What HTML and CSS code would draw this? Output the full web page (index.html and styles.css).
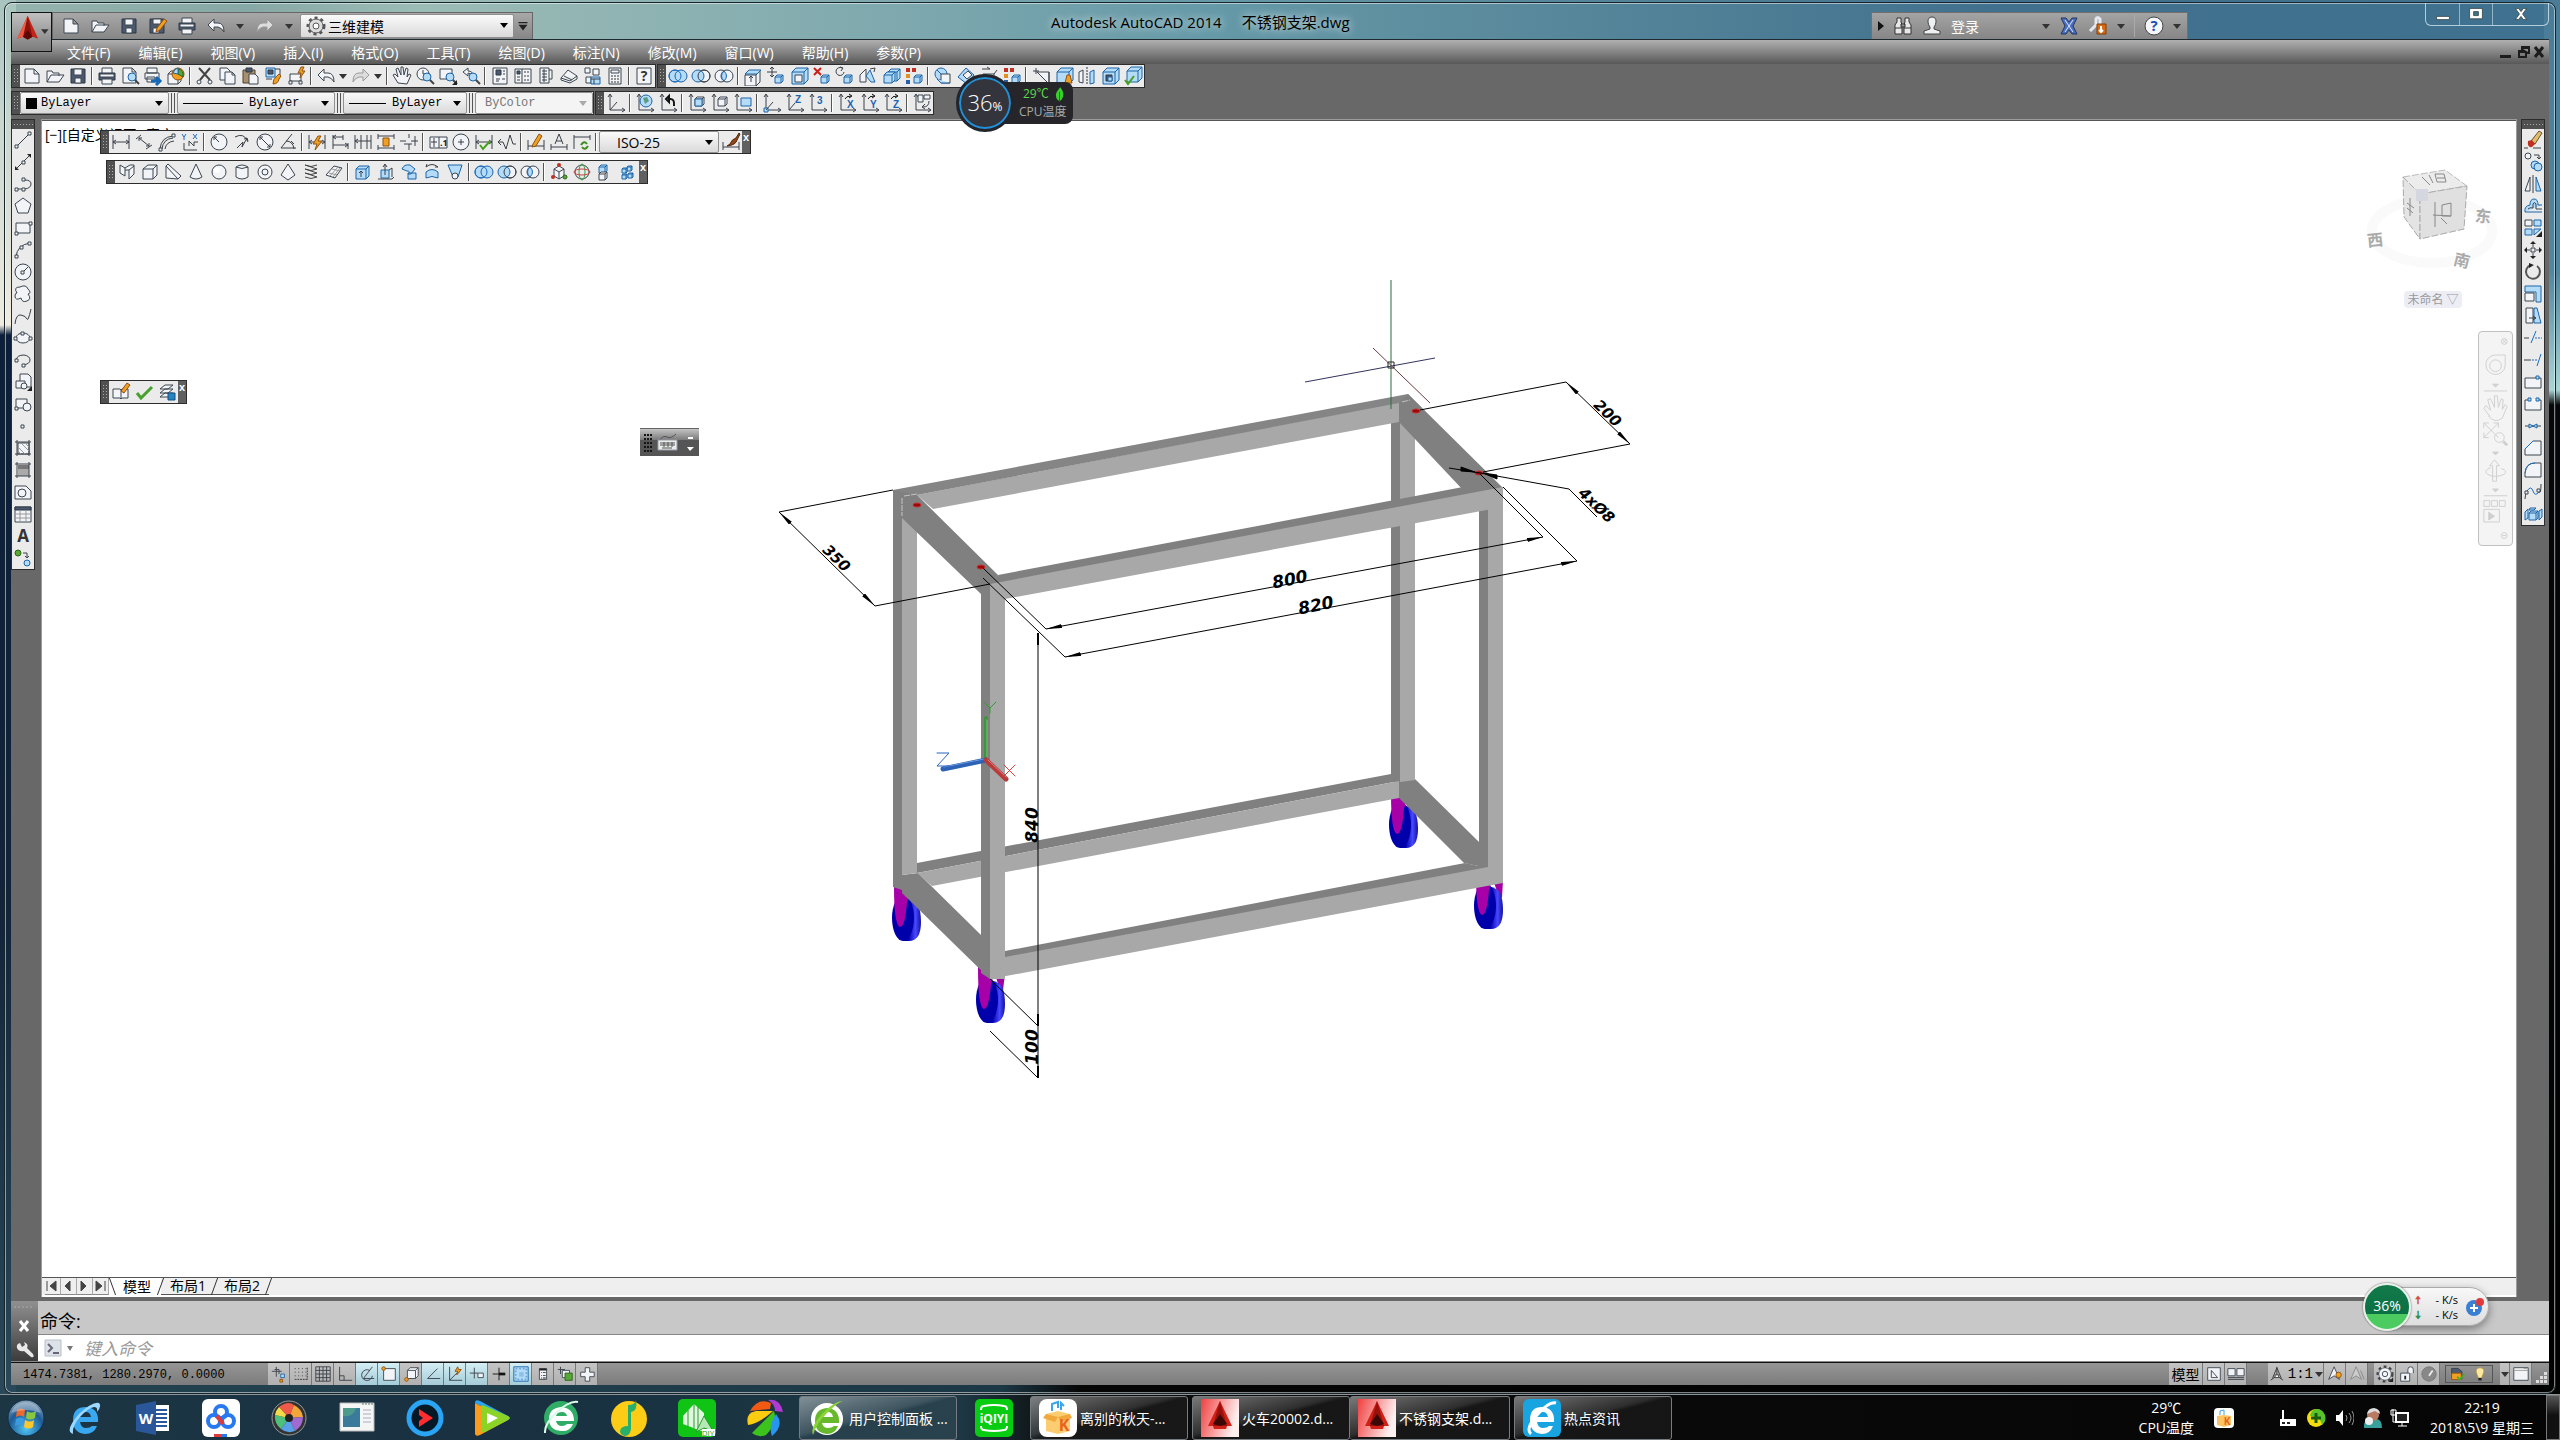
FILE: index.html
```html
<!DOCTYPE html>
<html lang="zh-CN">
<head>
  <meta charset="UTF-8">
  <title>Autodesk AutoCAD 2014 - 不锈钢支架.dwg</title>
  <link rel="stylesheet" href="styles.css">
</head>
<body>

  <div class="window">
    <!-- Title bar -->
    <header class="titlebar">
      <div class="quick-access">
        <div class="icons qat" data-icons="new open save saveas print undo v redo v"></div>
        <div class="combo workspace-combo">
          <svg class="combo-icon" viewBox="0 0 20 20"><circle cx="10" cy="10" r="8" fill="none" stroke="#555" stroke-width="3" stroke-dasharray="3 3"/><circle cx="10" cy="10" r="7" fill="#ddd" stroke="#555"/><circle cx="10" cy="10" r="3" fill="#fff" stroke="#555"/></svg>
          <select aria-label="工作空间"><option>三维建模</option></select>
        </div>
        <button class="qat-more" aria-label="自定义快速访问工具栏"></button>
      </div>
      <div class="title"><span>Autodesk AutoCAD 2014</span><span>不锈钢支架.dwg</span></div>
      <div class="info-center">
        <i class="play"></i>
        <svg viewBox="0 0 20 20"><path d="M4 2h4v4l1 3v9H2V9l2-3zM12 2h4v4l2 3v9h-7V9l1-3zM8 8h4v3H8z" fill="#e8e8e8" stroke="#333"/><path d="M2 12h7M11 12h7" stroke="#333"/></svg>
        <svg viewBox="0 0 20 20"><path d="M10 1c6 0 4 8 2 10v2l6 2v3H2v-3l6-2v-2C6 9 4 1 10 1z" fill="#eef1f4" stroke="#444"/></svg>
        <button class="login">登录</button>
        <i class="drop"></i>
        <svg viewBox="0 0 20 20"><path d="M2 2h5l3 4 3-4h5l-4 8 4 8h-5l-3-4-3 4H2l4-8z" fill="#4a6fc0" stroke="#24365c"/><path d="M6 4l8 12M14 4L6 16" stroke="#dce6fa"/></svg>
        <svg viewBox="0 0 20 20"><path d="M2 15L8 9V3q1-3 4 0v6l5 5" fill="none" stroke="#e4e8f0" stroke-width="3"/><path d="M9 8h9v10H9z" fill="#d96a12" stroke="#8a3c00"/><path d="M13 10v6m-2-2l2 2 2-2" stroke="#fff" stroke-width="2" fill="none"/></svg>
        <i class="drop"></i>
        <span class="info-sep"></span>
        <svg viewBox="0 0 20 20"><circle cx="10" cy="10" r="9" fill="#f4f6fa" stroke="#444"/><text x="10" y="15" text-anchor="middle" font-size="15" font-weight="bold" fill="#1c4fb0">?</text></svg>
        <i class="drop"></i>
      </div>
      <div class="window-buttons">
        <button aria-label="最小化"><svg viewBox="0 0 20 20"><path d="M2 13h16v4H2z" fill="#fff" stroke="#344"/></svg></button>
        <button aria-label="最大化"><svg viewBox="0 0 20 20"><path d="M2 3h16v13H2zM7 7v5h6V7z" fill="#fff" stroke="#344" fill-rule="evenodd"/></svg></button>
        <button aria-label="关闭"><svg viewBox="0 0 20 20"><path d="M3 3h4l3 4 3-4h4l-5 7 5 7h-4l-3-4-3 4H3l5-7z" fill="#fff" stroke="#344"/></svg></button>
      </div>
    </header>

    <button class="app-button" aria-label="应用程序菜单">
      <svg viewBox="0 0 40 40"><path d="M16 3l11 24-6-2-5 3-5-3-6 2z" fill="#c32417"/><path d="M16 3l5 22-5 3-5-3z" fill="#8d120b"/><path d="M16 3L5 27l6-2z" fill="#ef5a45"/><path d="M16 18l5 7-5 3-5-3z" fill="#5d0805"/><path d="M30 17h8l-4 5z" fill="#333"/></svg>
    </button>

    <!-- Menu bar -->
    <nav class="menubar">
      <button>文件(F)</button>
      <button>编辑(E)</button>
      <button>视图(V)</button>
      <button>插入(I)</button>
      <button>格式(O)</button>
      <button>工具(T)</button>
      <button>绘图(D)</button>
      <button>标注(N)</button>
      <button>修改(M)</button>
      <button>窗口(W)</button>
      <button>帮助(H)</button>
      <button>参数(P)</button>
      <div class="mdi-buttons">
        <svg viewBox="0 0 46 16"><path d="M1 11h11v3H1zM22 2h9v8h-3v4h-9V6h3zM24 5h5v3M21 9h5v3h-5z" fill="#1c1c1c" fill-rule="evenodd"/><path d="M36 3l8 10M44 3l-8 10" stroke="#1c1c1c" stroke-width="3"/></svg>
      </div>
    </nav>

    <!-- Docked toolbars -->
    <div class="dock">
      <div class="dock-row">
        <div class="toolbar"><div class="icons" data-icons="new open save | print preview publish globe | cut copy paste match blockedit | undo v redo v | hand zoomrt zoomwin zoomprev | props design palette sheet markup calc | help"></div></div>
        <div class="toolbar"><div class="icons" data-icons="union subtract intersect | extface moveface offface delface rotface taperface copyface colorface | copyedge blueedge edge colorface | imprint clean separate shell check"></div></div>
      </div>
      <div class="dock-row">
        <div class="toolbar">
          <div class="combo color-combo"><i class="swatch"></i><select aria-label="颜色"><option>ByLayer</option></select></div>
          <i class="double-bar"></i>
          <div class="combo line-combo"><i class="line"></i><select aria-label="线型"><option>ByLayer</option></select></div>
          <i class="double-bar"></i>
          <div class="combo weight-combo"><i class="line"></i><select aria-label="线宽"><option>ByLayer</option></select></div>
          <i class="double-bar"></i>
          <div class="combo plot-combo disabled"><select aria-label="打印样式" disabled><option>ByColor</option></select></div>
        </div>
        <div class="toolbar"><div class="icons" data-icons="ucs | ucsworld ucsprev | ucsface ucsobj ucsview | ucsorigin ucsz ucs3 | ucsrx ucsry ucsrz | ucsapply"></div></div>
      </div>
    </div>

    <main class="workspace">
      <div class="toolbar vertical"><div class="icons" data-icons="line xline pline polygon rect arc circle cloud spline ellipse earc insert block point hatch gradient region table text addsel"></div></div>

      <div class="viewport-frame">
        <div class="viewport">
          <span class="view-label">[−][自定义视图][真实]</span>

          <!-- Model space: trolley frame with castors and dimensions -->
          <svg class="model" viewBox="42 121 2474 1156">
            <defs>
              <linearGradient id="tread"><stop offset="0.300" stop-color="#0000b0"/><stop offset="0.700" stop-color="#4848ff"/><stop offset="1" stop-color="#1010a0"/></linearGradient>
              <marker id="arrow" viewBox="0 0 16 4" refX="16" refY="2" markerWidth="16" markerHeight="4" markerUnits="userSpaceOnUse" orient="auto-start-reverse"><path d="M0 0l16 2-16 2z"/></marker>
              <g id="castor">
                <path d="M903 898q9 0 15 6q3 8 3 18q0 19-12 19h-6z" fill="url(#tread)"/>
                <ellipse cx="903" cy="918" rx="11" ry="23" fill="#0000aa"/>
                <path d="M894 882h19l-6 20q-2 25-7 25q-6-2-6-40z" fill="#a800a8"/>
              </g>
            </defs>
            <use href="#castor"/>
            <use href="#castor" x="497" y="-93"/>
            <path d="M995 974h10l-2 16-4-3zM1493 880h10l-1 18-4-4z" fill="#a000a0"/>
            <use href="#castor" x="84" y="82"/>
            <use href="#castor" x="582" y="-12"/>

            <g class="dark">
              <path d="M1391 415h9v367h-9z"/>
              <path d="M917 863l474-89 8 7-482 92z"/>
              <path d="M1399 781l16-2 64 63 9 26-24-5-58-58-7-7z"/>
              <path d="M893 490h9v400l-9-3z"/>
              <path d="M902 875l16-2 63 62 9 44-88-86z"/>
              <path d="M1005 951l460-88 23 5-483 91z"/>
              <path d="M1479 505h9v363h-9z"/>
            </g>
            <g class="light">
              <path d="M1400 420h15v360l-15 2z"/>
              <path d="M917 873l482-92v17L932 886z"/>
              <path d="M902 515l15 10v348l-15 2z"/>
              <path d="M1005 957l483-90V500l15-5v388L990 979v-25z"/>
              <path d="M917 495l482-93v20L933 509z"/>
            </g>
            <g class="dark">
              <path d="M893 490l515-96 14 14-23-5-482 92-24 3z" fill="#858585"/>
              <path d="M893 490l24 5 81 80-8 13-9 6-79-76-9-5z"/>
              <path d="M1408 394l95 94-40 2-64-68v-19z"/>
              <path d="M998 575l465-88 40 1-513 97z"/>
              <path d="M981 583h9v396l-9-6z"/>
            </g>
            <path class="light" d="M990 584l513-97v20L1005 599v380h-15z"/>
            <path d="M902 498v18M904 496l13-2M1402 402l8-2" stroke="#c4c4c4" fill="none" stroke-dasharray="6 1"/>
            <g fill="#a00808" stroke="#c03030"><ellipse cx="917" cy="505" rx="4" ry="2"/><ellipse cx="981" cy="567" rx="4" ry="2"/><ellipse cx="1416" cy="411" rx="4" ry="2"/><ellipse cx="1479" cy="473" rx="4" ry="2"/></g>

            <!-- dimension lines -->
            <g class="dims">
              <path d="M893 490l-114 22M875 606l115-22M1420 410l146-28M1483 472l147-28M983 568l63 61M1480 474l63 63M983 578l82 79M1503 487l74 74M990 979l48 47M990 1031l48 47"/>
              <path class="ends" d="M779 512l96 94"/>
              <path class="ends" d="M1566 382l64 62"/>
              <path class="ends" d="M1046 629l497-92"/>
              <path class="ends" d="M1065 657l512-96"/>
              <path d="M1038 633v445"/>
              <path d="M1038 633v12M1038 1014v12M1038 1066v12" stroke-width="2"/>
              <path d="M1597 517l-28-28-89-16-31-5"/>
              <path d="M1475 472l-14-5v4zM1483 473l14 2v4z" fill="#000"/>
            </g>
            <g class="dim-text">
              <text class="steep" transform="translate(833 562) rotate(44)">350</text>
              <text class="steep" transform="translate(1604 417) rotate(44)">200</text>
              <text class="steep" transform="translate(1593 509) rotate(44)">4xØ8</text>
              <text transform="translate(1291 585) rotate(-11)">800</text>
              <text transform="translate(1317 611) rotate(-11)">820</text>
              <text transform="translate(1038 825) rotate(-90)">840</text>
              <text transform="translate(1038 1047) rotate(-90)">100</text>
            </g>

            <!-- UCS icon -->
            <g fill="none" stroke-linecap="round">
              <path d="M986 760v-42" stroke="#3f9440" stroke-width="4"/><path d="M987 758v-38" stroke="#82c482"/>
              <path d="M986 760l-43 9" stroke="#2d62b4" stroke-width="5"/><path d="M984 759l-40 8" stroke="#6a9be2"/>
              <path d="M986 760l20 19" stroke="#b83a3a" stroke-width="5"/><path d="M988 760l18 17" stroke="#e08080"/>
              <path d="M984 702l6 6 6-6M990 708v5" stroke="#2ba02b"/>
              <path d="M1004 765l11 11M1015 765l-11 11" stroke="#c44"/>
              <path d="M937 753h12l-12 13h12" stroke="#2864c0"/>
            </g>

            <!-- crosshair -->
            <g fill="none">
              <path d="M1391 280v129" stroke="#2f6a38"/>
              <path d="M1305 382l130-24" stroke="#33335e"/>
              <path d="M1373 348l57 55" stroke="#6a3a40"/>
              <path d="M1388 362h6v6h-6z" stroke="#222"/>
            </g>
          </svg>

          <!-- View cube and navigation bar -->
          <svg class="view-cube" viewBox="0 0 140 150">
            <ellipse cx="71" cy="71" rx="60" ry="32" fill="none" stroke="#fafafa" stroke-width="10"/>
            <path d="M42 17l42-7 22 16-47 8z" fill="#ececec" stroke="#bbb" stroke-dasharray="7 2"/>
            <path d="M42 17l17 17v45L43 57z" fill="#e4e4e4" stroke="#aaa" stroke-dasharray="7 2"/>
            <path d="M59 34l47-8-3 43-44 10z" fill="#e0e0e0" stroke="#aaa" stroke-dasharray="7 2"/>
            <rect x="55" y="29" width="12" height="12" fill="#d4d6e0"/>
            <path d="M61 17l8 8M68 15l4 8M74 14h9l2 8h-9zM76 18h8M46 48l6 5M49 38v18M53 48l-7-5M74 42v25M72 55l18 1M81 45l9-2v13h-9zM80 58l6 6" fill="none" stroke="#888"/>
            <g fill="#aaa" font-size="16" font-weight="bold"><text x="6" y="86" transform="rotate(-6 14 80)">西</text><text x="93" y="106" transform="rotate(14 100 100)">南</text><text x="114" y="62" transform="rotate(6 122 57)">东</text></g>
          </svg>
          <button class="view-name">未命名 ▽</button>
          <div class="nav-bar">
            <svg viewBox="0 0 34 214" fill="none" stroke="#cfcfcf" stroke-width="1"><circle cx="26" cy="7" r="3"/><path d="M24 5l4 4m0-4l-4 4"/><path d="M17 21h10v11a10 10 0 1 1-10-11z"/><circle cx="17" cy="32" r="6"/><path d="M14 51h6l-3 3zM14 121h6l-3 3zM14 159h6l-3 3z" fill="#cfcfcf"/><path d="M5 58h24M5 166h24"/><path d="M11 84l-6-8 2-3 5 5-3-11 3-1 4 9v-12h3l1 12 3-9 2 1-1 10 3-5 2 2-5 12q-8 6-14-2z"/><path d="M5 91l15 15M20 91L5 106M5 96v-5h5M15 91h5v5M5 101v5h5"/><circle cx="21" cy="106" r="5"/><path d="M25 110l4 4" stroke-width="3"/><path d="M14 151v-16h-3l5-6 5 6h-3v16zM12 137q-8 3-3 7 7 4 17 0 4-4-3-6"/><path d="M5 171h6v6H5zM13 171h6v6h-6zM21 171h6v6h-6zM5 180h16v13H5z"/><path d="M10 183l6 4-6 4z" fill="#cfcfcf"/><circle cx="26" cy="207" r="3"/><path d="M24 207h4"/></svg>
          </div>

          <!-- Floating toolbars -->
          <div class="toolbar floating dim-bar">
            <div class="icons" data-icons="dlin dali darc dord | drad djog ddia dang | dquick dbase dcont dspace dbreak | dtol dcenter dinsp djogl | dedit dtedit dupd |"></div>
            <div class="combo style-combo"><select aria-label="标注样式"><option>ISO-25</option></select></div>
            <div class="icons" data-icons="dstyle"></div>
            <button class="close" aria-label="关闭">x</button>
          </div>
          <div class="toolbar floating solid-bar">
            <div class="icons" data-icons="polysolid box wedge cone sphere cylinder torus pyramid helix planar | extrude presspull sweep revolve loft | union subtract intersect | move3d rotate3d align3d array3d"></div>
            <button class="close" aria-label="关闭">x</button>
          </div>
          <div class="toolbar floating ref-bar">
            <div class="icons" data-icons="refedit tick layers"></div>
            <button class="close" aria-label="关闭">x</button>
          </div>
          <div class="ime-bar">
            <svg viewBox="0 0 59 28"><g fill="#151515"><path d="M4 5h2v2H4zM7 5h2v2H7zM10 5h2v2h-2zM4 9h2v2H4zM7 9h2v2H7zM10 9h2v2h-2zM4 13h2v2H4zM7 13h2v2H7zM10 13h2v2h-2zM4 17h2v2H4zM7 17h2v2H7zM10 17h2v2h-2zM4 21h2v2H4zM7 21h2v2H7zM10 21h2v2h-2z"/></g><path d="M20 11q3-5 7-3t9-3" fill="none" stroke="#555"/><path d="M18 11h19v10H18z" fill="#e8eee8" stroke="#99a"/><path d="M20 14h15M20 16h15M22 19h10M24 13v5M28 13v5M32 13v5" stroke="#555"/><path d="M48 8h5v2h-5zM47 18h7l-4 4z" fill="#fff"/></svg>
          </div>
        </div>
        <!-- Layout tabs -->
        <div class="layout-tabs">
          <div class="tab-nav">
            <button aria-label="第一个"><svg viewBox="0 0 14 16"><path d="M2 3v10M11 3v10L5 8z"/></svg></button>
            <button aria-label="上一个"><svg viewBox="0 0 14 16"><path d="M9 3v10L4 8z"/></svg></button>
            <button aria-label="下一个"><svg viewBox="0 0 14 16"><path d="M4 3v10l5-5z"/></svg></button>
            <button aria-label="最后一个"><svg viewBox="0 0 14 16"><path d="M3 3v10l6-5zM12 3v10"/></svg></button>
          </div>
          <button class="tab active">模型</button>
          <button class="tab">布局1</button>
          <button class="tab">布局2</button>
        </div>
      </div>

      <div class="toolbar vertical"><div class="icons" data-icons="erase copyobj mirror offset array move rotate scale stretch trim extend breakpt break join chamfer fillet blend explode"></div></div>
    </main>

    <!-- Command line -->
    <section class="command">
      <div class="command-handle">
        <svg viewBox="0 0 26 60"><path d="M3 6h20" stroke="#aaa" stroke-dasharray="2 2"/><path d="M9 20l8 10M17 20L9 30" stroke="#fff" stroke-width="3"/><path d="M6 47q-1-4 3-5l2 4 3-2-1-3q5 2 3 6l6 6q2 4-2 3l-7-6q-5 1-7-3z" fill="#e8e8e8"/></svg>
      </div>
      <div class="command-body">
        <div class="history">命令:</div>
        <div class="prompt">
          <svg viewBox="0 0 18 18"><path d="M1 1h16v16H1z" fill="#dde2e8" stroke="#b8bfc8"/><path d="M4 5l4 4-4 4M9 14h6" fill="none" stroke="#667" stroke-width="2"/></svg>
          <i class="drop"></i>
          <input type="text" placeholder="键入命令" aria-label="命令">
        </div>
      </div>
    </section>

    <!-- Status bar -->
    <footer class="statusbar">
      <span class="coords">1474.7381, 1280.2970, 0.0000</span>
      <div class="icons status-icons" data-icons="stinfer stsnap stgrid stortho stpolar* stosnap* st3d sttrack* stducs* stdyn* stlwt sttrans* stqp stsel stplus"></div>
      <div class="status-right">
        <button class="cell">模型</button>
        <div class="icons status-icons" data-icons="layoutm layoutv"></div>
        <button class="cell scale"><svg viewBox="0 0 20 20"><path d="M10 2v10l7 5M10 12l-7 5M10 3L5 15M10 3l5 12" fill="none" stroke="#333"/><path d="M8 11h4v3H8z" fill="#fff" stroke="#333"/></svg><span>1:1</span><i class="drop"></i></button>
        <div class="icons status-icons" data-icons="annovis annoauto"></div>
        <div class="icons status-icons gap" data-icons="gear lock perf"></div>
        <div class="tray-box"><div class="icons" data-icons="trayfile bulb"></div></div>
        <button class="cell more" aria-label="状态栏菜单"><i class="drop"></i></button>
        <div class="icons status-icons" data-icons="cleanscr"></div>
        <svg class="grip-corner" viewBox="0 0 14 14"><path d="M9 1h3v3H9zM5 5h3v3H5zM9 5h3v3H9zM1 9h3v3H1zM5 9h3v3H5zM9 9h3v3H9z" fill="#ddd"/></svg>
      </div>
    </footer>
  </div>

  <!-- Desktop widgets -->
  <div class="cpu-widget">
    <div class="cpu-ring"><b>36</b><small>%</small></div>
    <div class="cpu-info">
      <span class="temp">29℃ <svg viewBox="0 0 12 16"><path d="M7 0q6 8 1 14l-2 1-2-1Q-1 8 7 0z" fill="#3ad02c"/><path d="M6 5v11" stroke="#176b10"/></svg></span>
      <span>CPU温度</span>
    </div>
  </div>

  <div class="net-widget">
    <div class="ball">36%</div>
    <div class="rates">
      <span><b class="up">🠅</b><em>- K/s</em></span>
      <span><b class="down">🠇</b><em>- K/s</em></span>
    </div>
    <svg viewBox="0 0 20 20"><circle cx="9" cy="11" r="8" fill="#3b7fd4"/><path d="M9 7v8M5 11h8" stroke="#fff" stroke-width="2"/><circle cx="15" cy="5" r="4" fill="#e03a3a"/></svg>
  </div>

  <!-- Taskbar -->
  <div class="taskbar">
    <button class="start" aria-label="开始"><svg viewBox="0 0 38 38"><defs><radialGradient id="orb" cx="0.500" cy="0.800" r="0.800"><stop offset="0" stop-color="#4fc4f4"/><stop offset="0.600" stop-color="#1d5b96"/><stop offset="1" stop-color="#8fa6b8"/></radialGradient></defs><circle cx="19" cy="19" r="18" fill="url(#orb)" stroke="#0d2c48"/><path d="M10 11q4-3 8 0l-1 7q-4-3-8 0z" fill="#ee6a2c"/><path d="M20 12q4 3 9 0l-1 7q-5 3-9 0z" fill="#8ac63e"/><path d="M9 20q4-3 8 0l-1 7q-4-3-8 0z" fill="#3c9be0"/><path d="M18 21q5 3 9 0l-1 7q-4 3-9 0z" fill="#fcc82e"/><path d="M4 14Q8 3 19 3t15 11q-14-6-30 0z" fill="#fff" opacity=".3"/></svg></button>
    <button class="pinned" aria-label="浏览器"><svg viewBox="0 0 38 38"><path d="M32 23H14q1 6 6 6 4 0 6-2h5q-3 8-12 8-12-1-12-14T20 8q13 1 12 15zM14 18h11q-1-5-5-5-5 0-6 5z" fill="#3aa8f0" fill-rule="evenodd"/><path d="M7 35Q-2 32 13 15 27 2 33 4q3 3-2 9 1-5-3-5-6 1-14 10T7 35z" fill="#9cd8ff"/></svg></button>
    <button class="pinned" aria-label="Word"><svg viewBox="0 0 38 38"><path d="M20 6h15v26H20z" fill="#fff"/><path d="M22 11h11M22 15h11M22 19h11M22 23h11M22 27h11" stroke="#2a569a" stroke-width="2"/><path d="M2 6l20-4v34L2 32z" fill="#2a569a"/><text x="12" y="25" text-anchor="middle" font-size="15" font-weight="bold" fill="#fff">W</text></svg></button>
    <button class="pinned" aria-label="网盘"><svg viewBox="0 0 38 38"><rect width="38" height="38" rx="6" fill="#fff"/><g fill="none" stroke-width="4"><circle cx="19" cy="13" r="6" stroke="#2878f0"/><circle cx="12" cy="22" r="6" stroke="#2878f0"/><circle cx="26" cy="22" r="6" stroke="#2878f0"/><path d="M15 17l6 8" stroke="#e03a3a"/></g><path d="M12 35h7v3h-7z" fill="#e03a3a"/><path d="M19 35h6v3h-6z" fill="#2878f0"/></svg></button>
    <button class="pinned" aria-label="看图"><svg viewBox="0 0 38 38"><circle cx="19" cy="19" r="17" fill="#333" stroke="#999"/><path d="M19 19L9 8q9-7 15-2z" fill="#ef5a4a"/><path d="M19 19l5-13q8 4 9 12z" fill="#f4a63a"/><path d="M19 19l14-1q0 9-8 14z" fill="#a06ad0"/><path d="M19 19l6 13q-8 3-14-2z" fill="#5aa0e8"/><path d="M19 19l-8 11q-7-6-6-14z" fill="#4fc07c"/><path d="M19 19L5 16q1-5 4-8z" fill="#f0dc4a"/><circle cx="19" cy="19" r="4" fill="#222"/></svg></button>
    <button class="pinned" aria-label="窗口"><svg viewBox="0 0 38 38"><path d="M2 4h34v28H2z" fill="#f4f6f6" stroke="#bbb"/><path d="M5 9h17v19H5z" fill="#4c9a8c"/><path d="M5 28V17q10 2 13-8h4v19z" fill="#3a7a9a"/><path d="M25 11h8M25 15h8M25 19h8M25 23h8" stroke="#aab"/><path d="M24 5h11" stroke="#677" stroke-dasharray="2 1"/></svg></button>
    <button class="pinned" aria-label="影音"><svg viewBox="0 0 38 38"><circle cx="19" cy="19" r="16" fill="#061824" stroke="#2aa4f4" stroke-width="5"/><path d="M13 10l14 9-14 9v-6l4-3-4-3z" fill="#ff2c30"/></svg></button>
    <button class="pinned" aria-label="视频"><svg viewBox="0 0 38 38"><path d="M1 4q0-4 5-2l28 15q4 2 0 4z" fill="#2ba4f0"/><path d="M1 4v30q0 4 5 2l28-15z" fill="#fc9a1c"/><path d="M7 8q0-3 4-1l23 10q3 2 0 4L11 33q-4 1-4-2z" fill="#8bd426"/><path d="M13 14l11 5-11 6z" fill="#fff"/></svg></button>
    <button class="pinned" aria-label="360浏览器"><svg viewBox="0 0 38 38"><circle cx="19" cy="19" r="17" fill="#2fac66"/><path d="M32 22H14q1 5 6 5 3 0 5-2h6q-3 8-12 7Q7 31 7 20T19 8q13 1 13 14zM14 17h11q-1-4-5-4-5 0-6 4z" fill="#fff" fill-rule="evenodd"/><path d="M3 34q-1-9 12-21T36 3" stroke="#d8ffe6" stroke-width="2" fill="none"/></svg></button>
    <button class="pinned" aria-label="音乐"><svg viewBox="0 0 38 38"><circle cx="19" cy="20" r="18" fill="#fccc16"/><path d="M18 27V6q7 0 8-5 2 11-5 12v17q-1 7-6 7-5-1-5-5 1-5 8-5z" fill="#28b06a"/></svg></button>
    <button class="pinned" aria-label="截图"><svg viewBox="0 0 38 38"><rect width="38" height="38" rx="5" fill="#10c416"/><path d="M16 5l10 9v19L5 25v-8z" fill="#e0f6e0"/><path d="M16 5v24M20 8v22M10 11v17" stroke="#2a9a2c"/><path d="M26 17l9 15-9-3-8 4z" fill="#b6e8b6" stroke="#2a9a2c"/><path d="M24 30h13v7H24z" fill="#fff"/><text x="30" y="37" text-anchor="middle" font-size="8" fill="#189a1c">DIY</text></svg></button>
    <button class="pinned" aria-label="风车"><svg viewBox="0 0 38 38"><path d="M4 12Q12-2 25 4l-1 6z" fill="#f25a14"/><path d="M2 26Q-1 14 10 12l17 0Q14 24 2 26z" fill="#fccc10"/><path d="M6 34l22-22q4 12-8 24-8 3-14-2z" fill="#3cc41c"/><path d="M26 37q-4-10 4-22 9 11-4 22z" fill="#2896f0"/><path d="M22 1q12-2 15 12l-8-1q0-7-7-11z" fill="#b03ad4"/></svg></button>

    <button class="task"><svg viewBox="0 0 38 38"><circle cx="19" cy="20" r="16" fill="#fff"/><path d="M31 24H14q1 5 6 5 4 0 6-2h4q-3 8-11 8Q7 34 7 22T19 9q13 1 12 15zM14 18h11q-1-5-5-5-5 0-6 5z" fill="#66b82c" fill-rule="evenodd"/><path d="M5 36q-3-8 9-21T35 2q-5 1-16 12T5 36z" fill="#8ad438"/></svg><span>用户控制面板 ...</span></button>
    <button class="pinned iqiyi" aria-label="爱奇艺"><svg viewBox="0 0 38 38"><rect width="38" height="38" rx="5" fill="#08cc12"/><path d="M6 11q0-4 3-4 10-2 20 0 3 0 3 4M6 27q0 4 3 4 10 2 20 0 3 0 3-4" fill="none" stroke="#fff" stroke-width="2"/><text x="19" y="24" text-anchor="middle" font-size="12" font-weight="bold" fill="#fff">iQIYI</text></svg></button>
    <button class="task"><svg viewBox="0 0 38 38"><rect width="38" height="38" rx="8" fill="#fff"/><path d="M7 15l12-3 12 3v17l-12 3-12-3z" fill="#fccc70"/><path d="M7 15l-3 4 12 4 3-5 3 5 11-4-2-4-12 3z" fill="#f0a83c"/><path d="M13 12V5l6-2v6M22 11V4l3 3" stroke="#3aa4e8" stroke-width="2" fill="none"/><text x="25" y="32" text-anchor="middle" font-size="16" font-weight="bold" fill="#e8641c">K</text></svg><span>离别的秋天-...</span></button>
    <div class="task-group">
      <button class="task"><svg viewBox="0 0 38 38"><path d="M0 0h38v38H0z" fill="url(#cadred)"/><defs><linearGradient id="cadred" x2="1" y2="0.300"><stop offset="0" stop-color="#f04040"/><stop offset="1" stop-color="#fff0f0"/></linearGradient></defs><path d="M19 2l12 25h-5l-1 3H13l-1-3H7z" fill="#d02018"/><path d="M19 2l7 25H12z" fill="#9a100c"/><path d="M19 15l7 10-7 2-7-2z" fill="#3c0806"/></svg><span>火车20002.d...</span></button>
      <button class="task"><svg viewBox="0 0 38 38"><path d="M0 0h38v38H0z" fill="url(#cadred)"/><path d="M19 2l12 25h-5l-1 3H13l-1-3H7z" fill="#d02018"/><path d="M19 2l7 25H12z" fill="#9a100c"/><path d="M19 15l7 10-7 2-7-2z" fill="#3c0806"/></svg><span>不锈钢支架.d...</span></button>
    </div>
    <button class="task"><svg viewBox="0 0 38 38"><rect width="38" height="38" rx="6" fill="#18a4e0"/><path d="M31 23H14q1 6 6 6 4 0 6-2h4q-3 8-11 8Q7 34 7 21T19 8q13 1 12 15zM14 18h11q-1-5-5-5-5 0-6 5z" fill="#fff" fill-rule="evenodd"/><path d="M8 35Q2 30 14 16T33 4" stroke="#fff" stroke-width="3" fill="none"/></svg><span>热点资讯</span></button>

    <div class="tray">
      <div class="tray-text cpu"><span>29℃</span><span>CPU温度</span></div>
      <svg class="kuwo" viewBox="0 0 20 20"><rect width="20" height="20" rx="4" fill="#fff"/><path d="M3 8l7-1 7 1v9l-7 2-7-2z" fill="#fcc464"/><path d="M6 7V3l4-1v5" fill="none" stroke="#3aa4e8"/><text x="13" y="17" text-anchor="middle" font-size="10" font-weight="bold" fill="#e8641c">K</text></svg>
      <div class="tray-icons">
        <svg viewBox="0 0 20 20"><path d="M4 2h2v9h12v7H2v-7h2z" fill="#fff"/><path d="M4 15h3M9 15h3" stroke="#222" stroke-width="2"/></svg>
        <svg viewBox="0 0 20 20"><circle cx="10" cy="10" r="9" fill="#f4dc10"/><path d="M10 1a9 9 0 0 1 6 16q-2-10-12-9 1-6 6-7z" fill="#58c42c"/><path d="M10 5v10M5 10h10" stroke="#185c10" stroke-width="3"/></svg>
        <svg viewBox="0 0 20 20"><path d="M2 7h3l4-5v16l-4-5H2z" fill="#fff"/><path d="M12 7q2 3 0 6M15 5q4 5 0 10M18 3q4 7 0 14" fill="none" stroke="#999"/></svg>
        <svg viewBox="0 0 20 20"><path d="M2 20q-1-9 7-9h5q6 0 6 9z" fill="#38a09a"/><circle cx="11" cy="7" r="6" fill="#b87a60"/><path d="M5 6q1-6 7-6 6 1 6 6l-5-3z" fill="#ddd"/><circle cx="7" cy="13" r="4" fill="#eee"/></svg>
        <svg viewBox="0 0 20 20"><path d="M6 5h12v9H6z" fill="#222" stroke="#fff" stroke-width="2"/><path d="M8 18h9M12 14v4M3 1v13h4M1 2h5v5H1z" fill="none" stroke="#fff"/></svg>
      </div>
      <div class="tray-text clock"><span>22:19</span><span>2018\5\9 星期三</span></div>
      <button class="show-desktop" aria-label="显示桌面"></button>
    </div>
  </div>

  <script src="script.js"></script>
</body>
</html>
```

FILE: styles.css
```css
*,
*::before,
*::after { box-sizing: border-box; }

body {
  margin: 0;
  height: 100vh;
  display: flex;
  flex-direction: column;
  overflow: hidden;
  font-family: "Open Sans", "Noto Sans CJK SC", sans-serif;
  font-size: 14px;
  color: #000;
  background:
    linear-gradient(#a9c4be 0, #c9d6ce 120px, #f0ece0 325px, #0b1f3c 335px, #12233a 900px, #2c4c5c 100%) left / 16px 100% no-repeat,
    linear-gradient(#4a7c98 0, #4f86a0 270px, #a8d4d4 390px, #05070a 405px, #000 100%) right / 16px 100% no-repeat,
    linear-gradient(90deg, #96b4ae 0, #86a8a6 250px, #9cbcb6 420px, #7ea8ae 900px, #669aa8 1200px, #5a8a9c 1500px, #41708e 2000px, #3f7290 100%) top / 100% 60px no-repeat,
    linear-gradient(90deg, #234250 0, #1c3846 1000px, #060606 1080px, #000 100%);
}

button {
  font: inherit;
  color: inherit;
  border: 0;
  background: none;
  padding: 0;
}

svg { display: block; }

/* ---------- window frame ---------- */
.window {
  position: relative;
  flex: 1;
  min-height: 0;
  margin: 2px 4px 0;
  padding: 0 6px 8px;
  border: 1px solid #16242c;
  border-radius: 8px;
  box-shadow: inset 0 0 0 1px rgba(255, 255, 255, 0.5);
  display: flex;
  flex-direction: column;
}

.titlebar {
  height: 36px;
  flex: none;
  display: flex;
  align-items: flex-end;
  justify-content: space-between;
  position: relative;
}

.quick-access {
  height: 27px;
  margin-left: 41px;
  padding-left: 6px;
  display: flex;
  align-items: center;
  background: linear-gradient(#a8a8a8, #868686);
  border: 1px solid #666;
  border-bottom: 0;
}

.qat { gap: 6px; }

.qat-more {
  width: 18px;
  height: 9px;
  background: #222;
  clip-path: polygon(25% 0, 75% 0, 75% 20%, 25% 20%, 25% 36%, 75% 36%, 50% 100%, 25% 36%);
}

.title {
  position: absolute;
  left: 1040px;
  top: 8px;
  display: flex;
  gap: 20px;
  font-size: 15px;
  line-height: 22px;
  text-shadow: 0 0 8px #fff;
}

.info-center {
  height: 27px;
  width: 317px;
  margin-left: auto;
  margin-right: 361px;
  padding: 0 6px;
  display: flex;
  align-items: center;
  gap: 9px;
  background: linear-gradient(#a4a4a4, #868686);
  border: 1px solid #707070;
  border-bottom: 0;
}

.info-center svg { width: 20px; height: 20px; }

.play {
  border-left: 6px solid #111;
  border-top: 5px solid transparent;
  border-bottom: 5px solid transparent;
}

.login {
  color: #fff;
  margin-right: auto;
}

.drop {
  flex: none;
  border-top: 5px solid #333;
  border-left: 4px solid transparent;
  border-right: 4px solid transparent;
}

.info-sep {
  width: 1px;
  height: 22px;
  background: #aaa;
}

.window-buttons {
  position: absolute;
  right: 0;
  top: 0;
  display: flex;
  height: 23px;
  border: 1px solid rgba(230, 245, 255, 0.7);
  border-top: 0;
  border-radius: 0 0 6px 6px;
}

.window-buttons button {
  width: 33px;
  display: flex;
  align-items: center;
  justify-content: center;
}

.window-buttons button + button { border-left: 1px solid rgba(230, 245, 255, 0.5); }
.window-buttons button:last-child { width: 56px; }
.window-buttons svg { width: 18px; height: 16px; }

.app-button {
  position: absolute;
  left: 6px;
  top: 9px;
  width: 41px;
  height: 40px;
  border: 1px solid #111;
  background: linear-gradient(#c0c0c0, #7c7c7c);
  z-index: 2;
}

.app-button svg { width: 39px; height: 38px; }

/* ---------- menu ---------- */
.menubar {
  height: 25px;
  flex: none;
  display: flex;
  align-items: center;
  gap: 28px;
  padding-left: 56px;
  color: #fff;
  background: linear-gradient(#b0b0b0, #585858);
  border-top: 1px solid #1e2a30;
}

.mdi-buttons {
  margin-left: auto;
  padding-right: 4px;
}

.mdi-buttons svg { width: 46px; height: 16px; }

/* ---------- toolbars ---------- */
.dock {
  flex: none;
  background: #686868;
  padding-bottom: 4px;
  display: flex;
  flex-direction: column;
  gap: 3px;
}

.dock-row {
  display: flex;
  gap: 1px;
}

.toolbar {
  display: flex;
  align-items: center;
  height: 24px;
  background: #ebebeb;
  border: 1px solid #2c2c2c;
  flex: none;
}

.toolbar::before {
  content: "";
  width: 8px;
  align-self: stretch;
  background:
    radial-gradient(circle, #aaa 1px, transparent 1px) 0 3px / 3px 3px content-box,
    #505050;
  padding: 3px 1px;
  flex: none;
}

.icons {
  display: flex;
  align-items: center;
}

.icons button {
  width: 23px;
  height: 22px;
  display: flex;
  align-items: center;
  justify-content: center;
}

.icons svg { width: 20px; height: 20px; }

.icons .sep {
  width: 6px;
  height: 18px;
  background: linear-gradient(90deg, transparent 2px, #555 2px, #555 3px, #fff 3px, #fff 4px, transparent 4px);
}

.icons .drop { margin: 0 2px; }
.qat .drop { margin: 0 3px; }

.toolbar.vertical {
  flex-direction: column;
  width: 24px;
  height: auto;
  align-self: flex-start;
}

.toolbar.vertical::before {
  width: auto;
  height: 9px;
}

.toolbar.vertical .icons { flex-direction: column; }

.combo {
  position: relative;
  height: 22px;
  display: flex;
  align-items: center;
  background: linear-gradient(#fafafa, #dadada);
  border: 1px solid #909090;
  border-radius: 2px;
  padding-left: 5px;
}

.combo::after {
  content: "";
  position: absolute;
  right: 5px;
  top: 8px;
  border-top: 5px solid #000;
  border-left: 4px solid transparent;
  border-right: 4px solid transparent;
}

.combo select {
  appearance: none;
  flex: 1;
  min-width: 0;
  height: 20px;
  border: 0;
  padding: 0;
  background: transparent;
  color: #000;
  font: 12px "Liberation Mono", monospace;
}

.combo.disabled { background: #f4f4f4; }
.combo.disabled::after { border-top-color: #aaa; }
.combo.disabled select { color: #777; opacity: 1; }

.swatch {
  width: 11px;
  height: 11px;
  background: #000;
  margin-right: 4px;
}

.line {
  height: 1px;
  background: #000;
  margin-right: 6px;
}

.color-combo { width: 149px; }
.line-combo { width: 158px; }
.line-combo .line { width: 60px; }
.weight-combo { width: 124px; }
.weight-combo .line { width: 37px; }
.plot-combo { width: 118px; padding-left: 9px; }

.double-bar {
  width: 4px;
  height: 20px;
  margin: 0 2px;
  border: 1px solid #555;
  border-width: 0 1px;
}

.workspace-combo {
  width: 214px;
  height: 24px;
  margin-left: 4px;
}

.workspace-combo select,
.style-combo select { font: 14px "Open Sans", "Noto Sans CJK SC", sans-serif; }
.combo-icon { width: 20px; height: 20px; margin-right: 2px; }
.style-combo { width: 120px; padding-left: 17px; }

/* shared icon paints */
.s { fill: none; stroke: #3a4048; }
.g { fill: none; stroke: #999; }
.w { fill: #f2f4f7; stroke: #3c4650; }
.d { fill: #4c5a70; stroke: #2c3644; }
.b { fill: #b4dcf8; stroke: #1c64a8; }
.bl { fill: none; stroke: #1c6cc0; }
.k { fill: #222; stroke: none; }
.r { fill: #c03020; stroke: none; }
.o { fill: #f0a020; stroke: #905010; }
.gr { fill: #58a838; stroke: #2c6418; }
.t { font: bold 10px "Liberation Sans", sans-serif; fill: #1c64b0; }

/* ---------- workspace ---------- */
.workspace {
  flex: 1;
  min-height: 0;
  display: flex;
  background: #686868;
  padding: 0 4px 4px 0;
}

.viewport-frame {
  flex: 1;
  min-width: 0;
  display: flex;
  flex-direction: column;
  margin: 0 4px 0 6px;
  border: 1px solid #9c9c9c;
  border-width: 1px 1px 0;
}

.viewport {
  position: relative;
  flex: 1;
  min-height: 0;
  background: #fff;
  border-top: 1px solid #555;
}

.view-label {
  position: absolute;
  left: 3px;
  top: 4px;
  line-height: 20px;
}

.model {
  position: absolute;
  inset: 0;
  width: 100%;
  height: 100%;
}

.dark { fill: #808080; }
.light { fill: #a8a8a8; }
.dims { fill: none; stroke: #000; }
.ends { marker-start: url(#arrow); marker-end: url(#arrow); }

.dim-text {
  font: italic bold 17px "DejaVu Sans", sans-serif;
  text-anchor: middle;
}

.steep { font-size: 15px; }

.view-cube {
  position: absolute;
  right: 15px;
  top: 39px;
  width: 140px;
  height: 150px;
}

.view-name {
  position: absolute;
  right: 54px;
  top: 170px;
  width: 58px;
  height: 17px;
  border-radius: 4px;
  background: #ededf6;
  color: #999;
  font-size: 12px;
  line-height: 17px;
  white-space: nowrap;
}

.nav-bar {
  position: absolute;
  right: 3px;
  top: 210px;
  width: 35px;
  height: 215px;
  border: 1px solid #c0c0c0;
  border-radius: 4px;
  background: #f4f4f4;
}

.nav-bar svg { width: 33px; height: 213px; }

.floating { position: absolute; }
.dim-bar { left: 58px; top: 9px; }
.solid-bar { left: 64px; top: 39px; }
.ref-bar { left: 58px; top: 259px; }

.close {
  width: 8px;
  align-self: stretch;
  background: #606060;
  color: #fff;
  font: bold 11px "Liberation Sans", sans-serif;
  padding-bottom: 10px;
}

.ime-bar {
  position: absolute;
  left: 598px;
  top: 307px;
  width: 59px;
  height: 28px;
  border-top: 1px solid #666;
  background: linear-gradient(#c4c4c4, #7a7a7a 11px, #555 11px);
}

.layout-tabs {
  flex: none;
  height: 20px;
  display: flex;
  background: #efefef;
  border-top: 1px solid #555;
  border-bottom: 2px solid #fff;
  padding-left: 3px;
}

.tab-nav { display: flex; }

.tab-nav button {
  width: 16px;
  border-right: 1px solid #aaa;
  border-bottom: 1px solid #888;
}

.tab-nav svg { width: 14px; height: 16px; fill: #444; stroke: #444; }

.tab {
  position: relative;
  padding: 0 9px;
  line-height: 16px;
  border-bottom: 1px solid #555;
}

.tab::after {
  content: "";
  position: absolute;
  right: 0;
  top: 0;
  height: 17px;
  border-right: 1px solid #333;
  transform: skewX(-20deg);
}

.tab.active {
  background: #fff;
  padding: 0 10px 0 14px;
  border-bottom: 0;
}

.tab.active::before {
  content: "";
  position: absolute;
  left: 3px;
  top: 0;
  height: 17px;
  border-left: 1px solid #333;
  transform: skewX(20deg);
}

/* ---------- command line ---------- */
.command {
  flex: none;
  display: flex;
  background: #fff;
  border-bottom: 1px solid #888;
}

.command-handle {
  width: 27px;
  background: linear-gradient(#909090, #3c3c3c);
}

.command-handle svg { width: 26px; height: 60px; fill: none; }
.command-body { flex: 1; }

.history {
  height: 34px;
  padding: 7px 2px 0;
  font-size: 18px;
  line-height: 26px;
  background: #c8c8c8;
  border-bottom: 1px solid #888;
}

.prompt {
  height: 26px;
  display: flex;
  align-items: center;
  gap: 5px;
  padding-left: 6px;
}

.prompt svg { width: 18px; height: 18px; }
.prompt .drop { border-top-color: #777; border-left-width: 3px; border-right-width: 3px; }

.prompt input {
  flex: 1;
  border: 0;
  padding: 0 0 0 6px;
  font: 17px "Open Sans", "Noto Sans CJK SC", sans-serif;
  height: 26px;
  outline: 0;
}

.prompt input::placeholder { color: #999; font-style: italic; }

/* ---------- status bar ---------- */
.statusbar {
  flex: none;
  height: 23px;
  display: flex;
  align-items: stretch;
  background: linear-gradient(#959595, #7c7c7c);
  border-top: 1px solid #111;
}

.coords {
  width: 257px;
  padding-left: 12px;
  font: 12px/24px "Liberation Mono", monospace;
}

.status-icons button,
.cell {
  width: 22px;
  height: 22px;
  background: linear-gradient(#c4c4c4, #b0b0b0);
  border-right: 1px solid #777;
}

.status-icons button.on { background: linear-gradient(#d4eef4, #a4ccd8); }
.status-icons svg { width: 18px; height: 18px; }

.status-right {
  margin-left: auto;
  display: flex;
}

.cell {
  width: 34px;
  display: flex;
  align-items: center;
  justify-content: center;
}

.scale {
  width: 56px;
  margin-left: 21px;
  gap: 2px;
  font: 14px "Liberation Mono", monospace;
}

.scale svg { width: 18px; height: 18px; }
.gap { margin-left: 6px; }

.tray-box {
  width: 48px;
  margin: 2px 7px 2px 5px;
  padding: 0 1px;
  border: 1px solid #555;
}

.tray-box .icons { height: 16px; }
.tray-box button { width: 22px; }
.tray-box svg { width: 16px; height: 16px; }
.more { width: 10px; }
.grip-corner { width: 14px; height: 14px; margin: 8px 0 0 3px; }

/* ---------- desktop widgets ---------- */
.cpu-widget {
  position: absolute;
  left: 956px;
  top: 74px;
  display: flex;
  align-items: center;
}

.cpu-ring {
  width: 58px;
  height: 58px;
  border-radius: 50%;
  background: #34343c;
  border: 3px solid #22262c;
  box-shadow: inset 0 0 0 2px #2090d8;
  color: #fff;
  display: flex;
  align-items: baseline;
  justify-content: center;
  line-height: 50px;
  z-index: 1;
}

.cpu-ring b { font-size: 22px; font-weight: 300; }
.cpu-ring small { font-size: 12px; }

.cpu-info {
  margin-left: -20px;
  padding: 1px 6px 1px 25px;
  height: 42px;
  border-radius: 8px;
  background: #26262a;
  color: #a8a8a8;
  font-size: 12px;
  line-height: 18px;
  display: flex;
  flex-direction: column;
  justify-content: center;
}

.temp { color: #5cd84c; display: flex; gap: 5px; align-items: center; padding-left: 4px; }
.temp svg { width: 11px; height: 15px; }

.net-widget {
  position: absolute;
  right: 71px;
  bottom: 114px;
  width: 110px;
  height: 39px;
  border-radius: 20px;
  background: linear-gradient(#f8f8f8, #dedede);
  border: 1px solid #aaa;
  box-shadow: 0 3px 8px rgba(0, 0, 0, 0.4);
  display: flex;
  align-items: center;
}

.ball {
  flex: none;
  width: 48px;
  height: 48px;
  margin-left: -17px;
  border-radius: 50%;
  border: 2px solid #e8f0ea;
  background: linear-gradient(#127a4a 0, #0b7044 66%, #4ccc60 66%);
  box-shadow: 0 0 2px #444;
  color: #fff;
  line-height: 42px;
  text-align: center;
}

.rates {
  flex: 1;
  padding: 0 7px 0 4px;
  font-size: 11px;
  line-height: 15px;
}

.rates span { display: flex; justify-content: space-between; }
.rates em { font-style: normal; }
.up { color: #d05040; }
.down { color: #2c9050; }
.net-widget svg { width: 20px; height: 20px; margin-right: 3px; flex: none; }

/* ---------- taskbar ---------- */
.taskbar {
  flex: none;
  height: 46px;
  display: flex;
  align-items: center;
  border-top: 1px solid #8c9498;
  color: #fff;
  background: linear-gradient(90deg, #1d3644 0, #183040 500px, #1d3844 960px, #0c0c0c 1060px, #050505 100%);
}

.taskbar svg { width: 38px; height: 38px; flex: none; }

.start,
.pinned {
  width: 68px;
  display: flex;
  justify-content: center;
}

.start { width: 51px; }
.iqiyi { width: 73px; }

.task {
  width: 158px;
  height: 44px;
  display: flex;
  align-items: center;
  gap: 3px;
  padding: 0 4px 0 8px;
  white-space: nowrap;
  border: 1px solid #767c80;
  border-radius: 3px;
  background: linear-gradient(165deg, rgba(255, 255, 255, 0.45), rgba(255, 255, 255, 0.15) 45%, rgba(255, 255, 255, 0.05) 50%);
}

.task-group {
  display: flex;
  margin: 0 4px;
}

.task-group .task + .task { border-left: 0; width: 160px; }

.tray {
  margin-left: auto;
  display: flex;
  align-items: center;
  height: 45px;
}

.tray-text {
  display: flex;
  flex-direction: column;
  text-align: center;
  line-height: 20px;
}

.taskbar .tray svg { width: 20px; height: 20px; }
.taskbar .tray .kuwo { margin: 0 44px 0 20px; }
.clock { margin: 0 12px 0 20px; }

.tray-icons {
  display: flex;
  gap: 8px;
}

.show-desktop {
  width: 14px;
  height: 45px;
  border: 1px solid #777;
  background: linear-gradient(#555, #111 45%);
}
```

FILE: script.js
```js
const p = (cls, d) => `<path class="${cls}" d="${d}"/>`;
const c = (cls, x, y, r) => `<circle class="${cls}" cx="${x}" cy="${y}" r="${r}"/>`;
const t = (x, y, s) => `<text class="t" x="${x}" y="${y}">${s}</text>`;

// small cube with its top left front corner at x,y
function cube(cls, x, y, s) {
  const k = Math.round(s / 3);
  return p(cls, `M${x} ${y}h${s}v${s}h${-s}zM${x} ${y}l${k} ${-k}h${s}v${s}l${-k} ${k}M${x + s} ${y}l${k} ${-k}`);
}

// square grip used on the ends of drawn lines
const node = (x, y) => p("w", `M${x - 1} ${y - 1}h3v3h-3z`);
const axes = p("s", "M4 2v15h14M2 4l2-3 2 3M16 15l3 2-3 2");
const dim = p("s", "M2 3v14M18 3v14M2 10h16M5 8l-3 2 3 2M15 8l3 2-3 2");
const page = p("w", "M3 2h9l4 4v11H3zM12 2v4h4");
const lens = c("b", 12, 11, 4) + '<path d="M15 14l4 4" stroke="#444" stroke-width="2"/>';
const pencil = p("o", "M9 12l7-9 3 2-7 9-4 2z");

const icons = {
  new: p("w", "M3 3h9l5 5v9H3zM12 3v5h5"),
  open: p("w", "M2 16V5h5l1 2h6v3M2 16l4-7h13l-5 7z"),
  save: p("d", "M3 3h14v14H3z") + p("w", "M6 3h8v6H6zM7 12h6v5H7z"),
  saveas: p("d", "M2 3h14v14H2z") + p("w", "M5 3h8v5H5zM5 12h6v5H5z") + pencil,
  print: p("w", "M5 2h10v6H5z") + p("d", "M2 7h16v7H2z") + p("w", "M3 8h14v3H3zM5 13h10v5H5z"),
  preview: page + lens,
  publish: p("w", "M4 2h10v5H4zM2 7h14v6H2zM4 11h8v5H4z") + '<path d="M8 15h8m-3-4l4 4-4 4" stroke="#1668b8" stroke-width="3" fill="none"/>',
  globe: cube("w", 2, 8, 10) + c("o", 12, 8, 6) + p("gr", "M12 3q6 1 5 8l-5-3z") + p("b", "M7 7q1-4 5-5v6z"),
  cut: '<path d="M4 2l11 12M15 2L5 14" stroke="#444" stroke-width="2"/>' + c("w", 4, 16, 2) + c("w", 15, 16, 2),
  copy: p("w", "M2 2h7l3 3v9H2z") + p("w", "M7 6h7l3 3v9H7zM14 6v3h3"),
  paste: '<path d="M2 4h12v13H2z" fill="#a8906c" stroke="#54432c"/>' + p("d", "M5 2h6v4H5z") + p("w", "M8 8h6l3 3v7H8z"),
  match: p("b", "M2 2h9v9H2z") + p("d", "M4 4h5v4H4z") + p("s", "M11 3h5v8M2 13h6") + p("o", "M12 11l3-3 2 2-2 3q-1 5-6 5 0-5 3-7z"),
  blockedit: p("w", "M3 8h11v7H3z") + node(3, 16) + node(13, 16) + p("o", "M14 1l-3 6h3l-1 5 5-7h-3l2-4z"),
  undo: p("w", "M2 9l6-6v4h4q6 0 6 9q-2-4-6-5H8v4z"),
  redo: '<path fill="#ddd" stroke="#999" d="M18 9l-6-6v4H8q-6 0-6 9q2-4 6-5h4v4z"/>',
  hand: p("w", "M6 17l-5-8 2-1 3 3-2-8 2-1 3 7V1h2l1 8 2-7 2 1-1 8 2-3 2 1-4 9z"),
  zoomrt: c("w", 8, 8, 6) + p("s", "M8 4v4h3") + lens,
  zoomwin: p("w", "M2 3h12v10H2z") + lens + p("k", "M19 14v5h-5z"),
  zoomprev: p("w", "M2 6l5-4v3q5 0 5 5-2-3-5-3v3z") + lens,
  props: p("w", "M3 2h14v16H3z") + p("d", "M6 4h5v5H6z") + p("s", "M13 5h2M13 8h2M6 13h4M12 13h3M6 15h3"),
  design: p("w", "M2 3h16v14H2z") + p("d", "M4 5h3v3H4z") + p("s", "M9 3v14M11 6h2M14 6h2M11 10h2M14 10h2M11 14h2M14 14h2M4 11h3M4 14h3"),
  palette: p("w", "M4 2h9v15H4zM13 4h3v9h-3") + p("s", "M6 5h5M6 8h5M6 11h5M6 14h5M8 3v13"),
  sheet: p("w", "M2 12l7-8 9 6v3l-7 4-9-3zM2 12l9 3 7-5M5 10l8 4"),
  markup: p("w", "M3 2h5v5H3zM11 3h6v6h-6zM4 11h5v6H4z") + p("b", "M9 11h9v7H9z") + p("s", "M9 13h9M12 13v5"),
  calc: p("w", "M4 2h12v16H4zM6 4h8v3H6z") + '<path d="M6 10h8M6 13h8M6 16h8" stroke="#333" stroke-dasharray="2 1"/>',
  help: p("w", "M3 2h14v16H3z") + '<text x="10" y="15" font-size="14" font-weight="bold" text-anchor="middle" fill="#333">?</text>',

  union: c("b", 7, 10, 6) + c("b", 13, 10, 6) + c("bl", 7, 10, 6),
  subtract: c("w", 13, 10, 6) + c("b", 7, 10, 6) + c("s", 13, 10, 6),
  intersect: c("w", 7, 10, 6) + c("w", 13, 10, 6) + p("b", "M10 5q5 5 0 10q-5-5 0-10z"),

  extface: cube("w", 2, 9, 11) + p("b", "M2 8l4-4h12l-4 4z") + p("s", "M8 16v-6m-2 2l2-2 2 2"),
  moveface: cube("b", 9, 11, 6) + p("s", "M6 1v10M1 6h10M4 3l2-2 2 2M4 9l2 2 2-2"),
  offface: cube("b", 3, 6, 12) + p("w", "M6 9h7v7H6z"),
  delface: cube("b", 9, 11, 6) + '<path d="M2 2l7 7M9 2L2 9" stroke="#c82018" stroke-width="2"/>',
  rotface: cube("b", 9, 11, 6) + p("s", "M7 2a4 4 0 1 0 2 4M5 1l3 1-2 3"),
  taperface: p("w", "M2 16V9l6-6v13z") + p("b", "M8 10l4-6 5 12h-4z") + p("s", "M12 3l5-1-1 4"),
  copyface: cube("b", 7, 6, 9) + cube("b", 3, 9, 8),
  colorface: cube("b", 10, 11, 6) + p("r", "M2 2h4v4H2zM8 2h4v4H8z") + '<path fill="#e09020" d="M2 8h4v4H2z"/>' + '<path fill="#2860a8" d="M2 14h4v4H2z"/>',
  copyedge: c("b", 8, 8, 6) + p("w", "M8 8h9v9H8z") + p("b", "M8 8l-4-4M17 17h-9l-4-4"),
  blueedge: p("b", "M2 11l8-9 8 7-7 9z") + p("w", "M7 9l5-4 4 4-5 4z"),
  edge: p("w", "M4 8h11v9H4z") + p("s", "M3 3h8l-3-2M15 8l3-4"),
  imprint: p("w", "M6 6h12v12z") + p("s", "M2 5h6M5 2v6M18 6v12"),
  clean: cube("b", 3, 6, 12) + p("o", "M13 9h3l2 8h-7z"),
  separate: p("w", "M2 6l4-2v13l-4-1z") + p("b", "M13 6l4-2v13l-4 1z") + '<path d="M10 1v18" stroke="#333" stroke-dasharray="2 1"/>',
  shell: cube("b", 3, 6, 12) + p("d", "M6 9h6v6H6z") + p("b", "M8 11h4v4H8z"),
  check: cube("b", 4, 5, 11) + '<path d="M2 14l3 4 6-8" stroke="#48a020" stroke-width="2" fill="none"/>',

  ucs: axes + p("s", "M4 17l7-8"),
  ucsworld: axes + c("b", 11, 8, 6) + '<path d="M8 5l4-1 2 4-4 3z" fill="#5c9c84"/>',
  ucsprev: axes + '<path d="M8 6l3-3v6zM11 6q6-1 5 7" stroke="#111" stroke-width="2" fill="none"/>',
  ucsface: axes + cube("w", 8, 6, 7) + p("b", "M8 6h7v7H8z"),
  ucsobj: axes + cube("w", 8, 6, 7),
  ucsview: axes + p("b", "M8 5h10v8H8z"),
  ucsorigin: axes + p("b", "M2 15h4v4H2z") + p("s", "M4 17l7-8"),
  ucsz: axes + p("s", "M4 17l6-7") + t(10, 10, "Z"),
  ucs3: axes + t(9, 11, "3"),
  ucsrx: axes + '<path d="M8 6q1-3 6-3m-2-2l3 2-3 2" stroke="#111" stroke-width="1" fill="none"/>' + t(10, 15, "X"),
  ucsry: axes + '<path d="M8 6q1-3 6-3m-2-2l3 2-3 2" stroke="#111" stroke-width="1" fill="none"/>' + t(10, 15, "Y"),
  ucsrz: axes + '<path d="M8 6q1-3 6-3m-2-2l3 2-3 2" stroke="#111" stroke-width="1" fill="none"/>' + t(10, 15, "Z"),
  ucsapply: axes + p("w", "M6 2h5v7H6zM12 2h6v4h-6z") + p("s", "M17 8q0 6-6 6m2-3l-3 3 3 2"),

  line: p("s", "M4 16L16 4") + node(3, 16) + node(16, 3),
  xline: p("s", "M3 17L17 3") + p("k", "M2 14v4h4zM18 6V2h-4z") + node(10, 10),
  pline: p("s", "M3 15h9q6-1 6-5t-6-4H9") + node(3, 15) + node(10, 15) + node(10, 5),
  polygon: p("w", "M10 2l8 6-3 9H5L2 8z"),
  rect: p("w", "M3 5h14v10H3z") + node(3, 15) + node(17, 5),
  arc: p("s", "M3 17Q4 5 17 3") + node(3, 16) + node(8, 7) + node(16, 3),
  circle: c("w", 10, 10, 8) + p("s", "M10 10l5-5") + node(9, 10),
  cloud: p("w", "M4 9q-4-6 3-6 6-3 8 2 4 4 0 5 4 5-1 7-5 2-6-3-6 3-6-2 0-3 2-3z"),
  spline: p("s", "M2 18q1-10 6-9t6 4 4-10"),
  ellipse: '<ellipse class="w" cx="10" cy="10" rx="7" ry="5"/>' + node(2, 10) + node(17, 10) + node(9, 5),
  earc: p("s", "M3 10q1-5 8-5 6 1 6 5t-7 5") + node(3, 10) + node(10, 15),
  insert: p("w", "M7 2h8l3 3v10H7z") + p("w", "M3 9h9v7H3z") + c("w", 11, 14, 3) + p("k", "M19 14v5h-5z"),
  block: p("w", "M3 5h11v9H3z") + node(3, 14) + c("w", 14, 13, 4),
  point: node(9, 10),
  hatch: p("w", "M5 5h11v11H5z") + p("s", "M2 4h16M4 2v16M2 16h16M16 2v16") + p("g", "M5 9l7 7M5 13l3 3M8 5l8 8M12 5l4 4"),
  gradient: '<path fill="#aaa" d="M5 5h11v11H5z"/>' + '<path fill="#777" d="M5 5h11v4H5z"/>' + p("s", "M2 4h16M4 2v16M2 16h16M16 2v16"),
  region: p("w", "M2 4h11l5 5v8H2z") + c("w", 9, 11, 4),
  table: p("w", "M2 3h16v15H2z") + p("d", "M2 3h16v3H2z") + p("g", "M2 10h16M2 14h16M7 6v12M13 6v12"),
  text: '<text x="10" y="16" font-size="17" font-weight="bold" text-anchor="middle" fill="#333">A</text>',
  addsel: c("gr", 5, 5, 3) + c("b", 14, 15, 3) + p("s", "M10 5h4v5m-2-2l2 2 2-2"),

  erase: '<path d="M8 11l8-10 3 2-7 11z" fill="#e0bc70" stroke="#6c5020"/>' + p("r", "M5 11l4-1 3 4-3 3q-5 1-4-6z") + p("s", "M1 18h4M10 18h8"),
  copyobj: c("w", 5, 4, 3) + p("s", "M11 3h5v4m-2-2l2 2 2-2") + c("b", 12, 13, 4) + c("b", 15, 15, 4),
  mirror: p("w", "M7 3v14H2z") + p("b", "M13 3v14h5z") + p("s", "M10 1v18"),
  offset: p("b", "M2 16q-1-6 5-7 0-6 4-6t4 6h4M2 16h17") + p("s", "M5 13q2-2 5-1V8q1-3 3 0v5h6"),
  array: p("w", "M2 2h7v6H2z") + p("b", "M11 2h7v6h-7zM2 11h7v6H2zM11 17v-6h7z") + p("k", "M19 13v6h-6z"),
  move: p("s", "M10 2v5M10 13v5M2 10h5M13 10h5M8 8h4v4H8z") + p("k", "M7 4l3-3 3 3zM7 16l3 3 3-3zM4 7l-3 3 3 3zM16 7l3 3-3 3z"),
  rotate: '<path d="M8 3a7 7 0 1 0 6 1" fill="none" stroke="#555" stroke-width="2"/>' + p("k", "M6 1l5 2-5 3z"),
  scale: p("b", "M2 2h16v16h-5V8H2z") + p("w", "M2 9h9v8H2z"),
  stretch: p("w", "M3 2h7v15H3z") + p("b", "M11 2h3l4 15h-7z") + p("s", "M6 12h7m-3-2l3 2-3 2"),
  trim: p("s", "M1 10h5") + p("bl", "M8 15l5-12M12 10h2M15 10h2M18 10h1"),
  extend: p("s", "M1 10h7") + p("bl", "M9 10h2M12 10h2M14 16l4-12"),
  breakpt: p("w", "M2 6h16v10H2z") + p("b", "M13 4h3v3h-3z"),
  break: p("w", "M2 6h16v10H2z") + '<path d="M8 5h5v2H8z" fill="#fff"/>' + p("b", "M5 4h3v3H5zM13 4h3v3h-3z"),
  join: p("s", "M2 10h16") + p("b", "M6 8l4 2-4 2zM14 8l-4 2 4 2z"),
  chamfer: p("w", "M2 11l8-8h8v14H2z") + p("bl", "M2 11l8-8"),
  fillet: p("w", "M2 13Q3 3 12 3h6v14H2z") + p("bl", "M2 13Q3 3 12 3"),
  blend: p("s", "M2 17q1-9 2-8M18 2q0 10-2 8") + p("bl", "M4 9q4-6 6 0t6 1") + node(3, 10) + node(15, 8),
  explode: cube("b", 6, 9, 7) + p("b", "M2 8l3-3v9l-3 2zM7 4h6l-2 2H6zM16 7l3-2v8l-3 3z"),

  dlin: dim,
  dali: p("s", "M2 7l5-4M12 17l6-4M5 6l10 8M5 9V6h3M12 14h3v-3"),
  darc: p("s", "M3 17Q4 5 16 4M8 17q1-7 9-8M5 17Q6 7 16 6") + node(3, 17) + node(16, 3),
  dord: p("s", "M4 11v7h13M9 14V9l5 5v-4h4") + p("bl", "M2 2l2 3 2-3M4 5v3M13 2l4 5M17 2l-4 5"),
  drad: c("w", 10, 10, 8) + p("s", "M10 10L5 5m0 3V5h3"),
  djog: p("s", "M3 5q9-5 13 5M5 16l6-6-1 5 5-9m-3 1l3-1 1 3"),
  ddia: c("w", 10, 10, 8) + p("s", "M5 5l10 10M5 8V5h3M12 15h3v-3"),
  dang: p("s", "M14 2L3 16h15M8 9q7 0 8 8M13 9l3 3"),
  dquick: dim + p("o", "M11 4l-5 8h4l-2 6 7-9h-4l3-5z"),
  dbase: p("s", "M3 3v14M3 5h10M13 3v5M3 13h15M18 11v6M6 3L3 5l3 2M15 11l3 2-3 2"),
  dcont: p("s", "M2 3v14M8 3v14M14 3v14M18 3v14M2 9h16M5 7L2 9l3 2"),
  dspace: p("s", "M2 2v5M18 2v5M2 4h16M2 13v5M18 13v5M2 16h16") + p("o", "M7 6h6v8H7z"),
  dbreak: p("s", "M1 9h6M12 9h7M10 2v4M10 12v6M16 4v10M5 12h8"),
  dtol: p("w", "M2 5h17v11H2zM11 5v11") + p("s", "M6 6v9M3 10h6") + '<text x="12" y="14" font-size="9" font-weight="bold" fill="#222">.1</text>',
  dcenter: c("w", 10, 10, 8) + p("s", "M10 7v6M7 10h6"),
  dinsp: dim + '<path d="M6 13l3 4 7-8" stroke="#48a020" stroke-width="2" fill="none"/>',
  djogl: p("s", "M1 10h5l3 7 4-14 3 9h3M4 7l-3 3 3 3"),
  dedit: p("s", "M2 8v10M18 8v10M2 14h16") + p("o", "M7 12l6-10 3 2-6 10-4 1z"),
  dtedit: p("s", "M2 12v6M18 12v6M2 15h16M6 12l4-10 4 10M7 9h6"),
  dupd: p("s", "M2 3v14M18 3v5M2 5h16") + '<path d="M9 13q3-5 6-1M16 14q-3 5-6 1" stroke="#3c8c20" stroke-width="2" fill="none"/>',
  dstyle: p("s", "M2 10v8M18 10v8M2 15h16") + '<path d="M9 12q2-5 6-6l3-5 1 1-3 6q-1 5-10 6z" fill="#904818" stroke="#552808"/>',

  polysolid: p("w", "M3 3l5 3v8l-5-3zM8 6l5-3h4v9l-5 5V8h-4M12 8l5-4"),
  box: p("w", "M3 7l5-4h9v10l-4 4H3zM3 7h10v10M13 7l4-4"),
  wedge: p("w", "M3 4v12l12 1 3-3L5 2zM3 4l12 13"),
  cone: p("w", "M10 2l6 13q-6 4-12 0z"),
  sphere: c("w", 10, 10, 7) + '<circle cx="8" cy="8" r="3" fill="#fff"/>',
  cylinder: p("w", "M4 5v10q6 4 12 0V5q-6-4-12 0 6 3 12 0"),
  torus: c("w", 10, 10, 7) + c("w", 10, 10, 3),
  pyramid: p("w", "M10 2l7 11-7 5-7-5z"),
  helix: '<path d="M4 3q6 3 12 0M4 7q6 3 12 0L4 3M4 11q6 3 12 0L4 7M4 15q6 3 12 0L4 11" stroke="#444" stroke-width="1" fill="none"/>',
  planar: p("w", "M2 13l8-9 8 2-7 10z") + p("g", "M5 11l8 2M8 7l8 2M6 14l8-9M9 15l7-9"),
  extrude: cube("b", 3, 7, 10) + p("s", "M8 15v-6m-2 2l2-2 2 2"),
  presspull: p("b", "M5 8h8v8H5z") + p("s", "M9 13V3m-2 2l2-3 2 3M2 17h14l2-2M13 8l3-2v9"),
  sweep: p("b", "M3 7q2-5 8-4l5 4-4 5H9q3-3-1-3zM9 11h8v6H9z"),
  revolve: p("b", "M4 10q6-5 12 0v6q-6-3-12 0z") + p("s", "M4 5q6-5 12 0m-12 0l1-3M16 5l-3 0"),
  loft: p("b", "M3 3h14l-4 12H8z") + c("w", 10, 14, 3),
  move3d: p("w", "M10 4l5 3v7l-5 3-5-3V7zM10 10v7M5 7l5 3 5-3") + c("r", 4, 15, 2) + c("r", 10, 3, 2) + c("gr", 16, 15, 2),
  rotate3d: c("s", 10, 10, 7) + '<ellipse cx="10" cy="10" rx="3" ry="8" fill="none" stroke="#3c9c3c"/><ellipse cx="10" cy="10" rx="8" ry="3" fill="none" stroke="#c84040"/>',
  align3d: cube("b", 4, 5, 6) + cube("w", 4, 12, 6),
  array3d: cube("b", 9, 5, 4) + cube("b", 4, 7, 4) + cube("b", 4, 13, 4) + cube("b", 10, 12, 4),
  refedit: p("w", "M2 7h7l1 1 1-1h6v9h-6l-1 1-1-1H2zM10 8v9") + p("o", "M10 9l6-8 3 2-6 8z"),
  tick: '<path d="M3 11l4 5L18 5" stroke="#48a030" stroke-width="3" fill="none"/>',
  layers: p("w", "M3 7l5-4h8l-5 4zM3 11l5-4h8l-5 4zM3 15l5-4h8l-5 4z") + '<path d="M11 11h7v7h-7z" fill="#2484c4" stroke="#14507c"/>',

  stinfer: p("s", "M2 7h11M7 2v11M5 5h5v5") + p("b", "M12 10h4v4h-4z") + p("o", "M11 16h3v3h-3z"),
  stsnap: '<path d="M3 4h14M3 8h14M3 12h14" stroke="#333" stroke-dasharray="1 3"/><path d="M3 16h14M17 3v13" stroke="#333" fill="none" stroke-dasharray="2 1"/>',
  stgrid: p("s", "M2 2h16v16H2zM6 2v16M10 2v16M14 2v16M2 6h16M2 10h16M2 14h16"),
  stortho: p("s", "M4 2v15h14M4 12h5v5"),
  stpolar: p("s", "M16 2L6 15h12M13 6a6 6 0 1 0 3 6"),
  stosnap: p("w", "M4 4h13v13H4z") + c("o", 4, 4, 2),
  st3d: cube("w", 6, 6, 9) + c("o", 5, 16, 2),
  sttrack: p("s", "M15 4L4 15h14"),
  stducs: p("s", "M4 2v15h14M4 17L15 6") + p("o", "M13 2l-3 5h3l-1 4 5-6h-3z"),
  stdyn: p("s", "M7 3v12M2 9h9") + p("w", "M11 9h6v5h-6z"),
  stlwt: '<path d="M10 3v14M3 10h7" stroke="#111"/><path d="M10 10h7" stroke="#111" stroke-width="3"/>',
  sttrans: p("b", "M2 2h16v16H2z") + '<path d="M4 4h12v12H4z" fill="none" stroke="#68a8d8" stroke-width="2" stroke-dasharray="2 2"/><path d="M8 8h5v5H8z" fill="#8cc0e4"/>',
  stqp: p("w", "M6 4h8v12H6z") + p("k", "M6 4h8v2H6zM8 8h1v1H8zM10 8h3v1h-3zM8 11h1v1H8zM10 11h3v1h-3zM8 14h1v1H8zM10 14h3v1h-3z"),
  stsel: p("s", "M2 5h8M5 2v8") + p("w", "M7 6h8v8H7z") + p("gr", "M10 9h8v8h-8z"),
  stplus: p("w", "M8 3h5v5h5v5h-5v5H8v-5H3V8h5z"),
  layoutm: p("w", "M3 3h14v14H3z") + p("s", "M7 6v8h7z"),
  layoutv: p("w", "M1 4h8v8H1zM11 4h8v8h-8z") + p("s", "M1 16h18M1 14h18"),
  annovis: p("w", "M9 2l6 14-6-4-6 4z") + c("o", 14, 11, 3),
  annoauto: '<path d="M9 2l6 14-6-4-6 4zM14 6l4 10" fill="#ccc" stroke="#888"/>',
  gear: '<circle cx="10" cy="10" r="8" fill="#eee" stroke="#444" stroke-width="3" stroke-dasharray="3 3"/>' + c("w", 10, 10, 7) + c("w", 10, 10, 3) + p("k", "M19 14v5h-5z"),
  lock: p("w", "M3 9h10v9H3zM11 9V5q0-3 3-3t3 3v4") + p("k", "M7 12h2v4H7z"),
  perf: '<circle cx="10" cy="10" r="8" fill="#888" stroke="#777"/><path d="M10 12l4-6" stroke="#eee" stroke-width="2"/>',
  trayfile: p("d", "M2 3h8l5 4v9H2z") + p("o", "M2 9h12v8H2z") + '<path d="M9 13l3 4 6-7" stroke="#48b020" stroke-width="2" fill="none"/>',
  bulb: '<path d="M10 2q7 1 4 8l-2 5H8l-2-5q-3-7 4-8z" fill="#fce8a0" stroke="#b09040"/>' + p("k", "M8 15h4v3H8z"),
  cleanscr: p("w", "M2 3h16v14H2z") + p("g", "M2 6h16M13 4h4")
};

document.querySelectorAll("[data-icons]").forEach(bar => {
  bar.innerHTML = bar.dataset.icons.trim().split(/\s+/).map(name => {
    if (name === "|") return '<span class="sep"></span>';
    if (name === "v") return '<i class="drop"></i>';
    const on = name.endsWith("*");
    const key = name.replace("*", "");
    return `<button class="${on ? "on" : ""}" aria-label="${key}"><svg viewBox="0 0 20 20">${icons[key]}</svg></button>`;
  }).join("");
});
```
